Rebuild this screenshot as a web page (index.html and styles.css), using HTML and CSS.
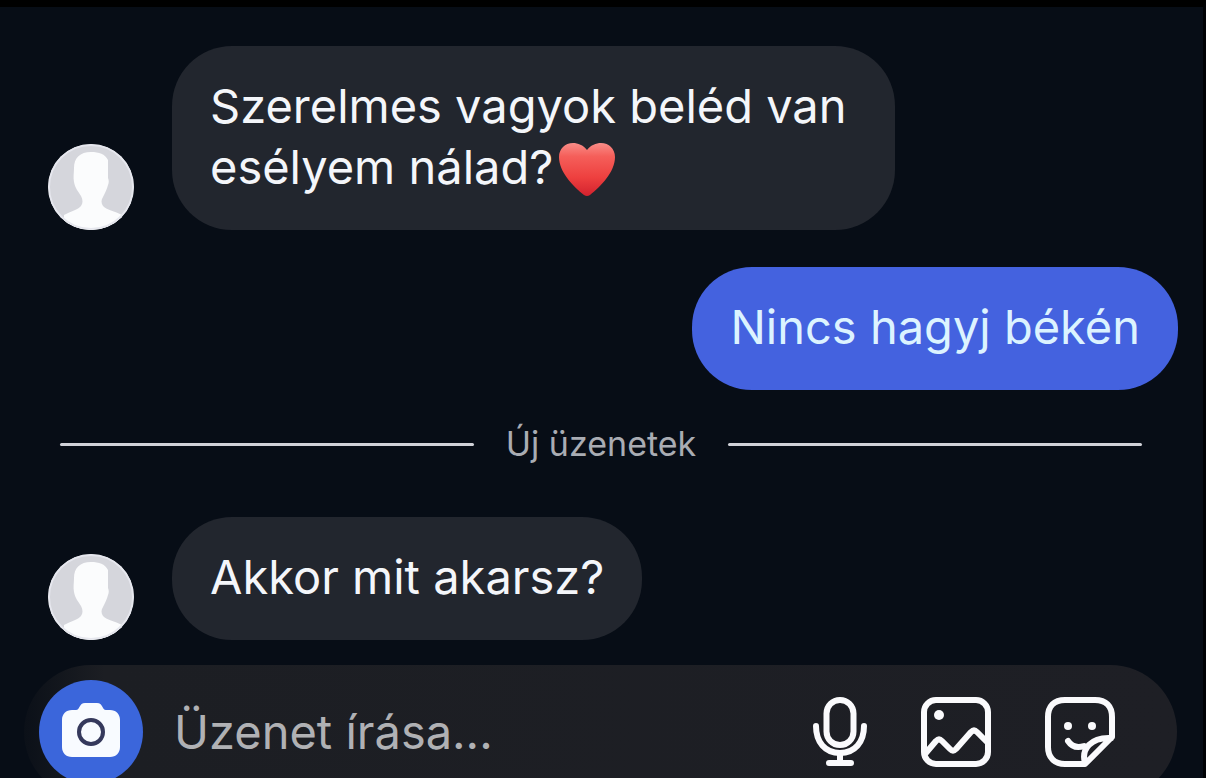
FILE: index.html
```html
<!DOCTYPE html>
<html lang="hu">
<head>
<meta charset="utf-8">
<meta name="viewport" content="width=device-width, initial-scale=1">
<title>Üzenetek</title>
<link rel="stylesheet" href="styles.css">
</head>
<body>
<svg class="defs" aria-hidden="true">
  <defs>
    <linearGradient id="heart-fill" x1="0" y1="0" x2="0" y2="1">
      <stop offset="0" stop-color="#f98d88"/>
      <stop offset=".25" stop-color="#f55f5a"/>
      <stop offset=".65" stop-color="#ee403f"/>
      <stop offset="1" stop-color="#d3222e"/>
    </linearGradient>
    <clipPath id="avatar-clip"><circle cx="43" cy="43" r="43"/></clipPath>
    <symbol id="person" viewBox="0 0 86 86">
      <g clip-path="url(#avatar-clip)">
        <rect width="86" height="86" fill="#d5d6dc"/>
        <path fill="#fbfcfd" d="M43 8c-11 0-17 6-17 16 0 5-1 9 0 14 1 6 4 9 7 14 2 4 2 7 0 10-3 4-10 5-17 9v15h58V71c-7-4-16-5-19-9-2-3-2-6 0-9 2-4 4-8 5-12 1-2 1-5 0-7V16c-3-6-9-8-17-8z"/>
        <circle cx="43" cy="43" r="42" fill="none" stroke="#e6e7ee" stroke-width="2"/>
      </g>
    </symbol>
  </defs>
</svg>
<main class="chat">
  <section class="thread" aria-label="Beszélgetés">
    <div class="message">
      <svg class="avatar" aria-hidden="true"><use href="#person"/></svg>
      <p class="bubble">Szerelmes vagyok beléd van esélyem nálad?<svg class="heart" viewBox="0 0 56 56" role="img" aria-label="❤️"><path fill="url(#heart-fill)" d="M28 8C24 3 19 1 14 1 6 1 0 7 0 15c0 15 14 29 25 38q3 2 6 0C42 44 56 30 56 15 56 7 50 1 42 1c-5 0-10 2-14 7z"/></svg></p>
    </div>
    <div class="message message-own">
      <p class="bubble bubble-own">Nincs hagyj békén</p>
    </div>
    <div class="divider"><span>Új üzenetek</span></div>
    <div class="message">
      <svg class="avatar" aria-hidden="true"><use href="#person"/></svg>
      <p class="bubble">Akkor mit akarsz?</p>
    </div>
  </section>
  <form class="composer">
    <button class="camera" type="button" aria-label="Kamera">
      <svg viewBox="0 0 58 56" width="58" height="56"><path fill="#f8fbff" d="M10 8h4c4 0 3-7 9-7h12c6 0 5 7 9 7h4c6 0 10 4 10 10v27c0 6-4 10-10 10H10C4 55 0 51 0 45V18C0 12 4 8 10 8z"/><circle cx="29" cy="30" r="12" fill="none" stroke="#35395c" stroke-width="4"/></svg>
    </button>
    <input class="field" type="text" placeholder="Üzenet írása..." aria-label="Üzenet írása">
    <div class="tools">
      <button class="tool" type="button" aria-label="Hangüzenet">
        <svg viewBox="0 0 54 70" width="54" height="70" class="line"><rect x="13.500" y="3" width="27" height="45" rx="13.500"/><path d="M3 29c0 16 9 27 24 27s24-11 24-27M27 56v9M16 66h22"/></svg>
      </button>
      <button class="tool" type="button" aria-label="Kép">
        <svg viewBox="0 0 70 70" width="70" height="70" class="line"><rect x="3" y="3" width="64" height="64" rx="12"/><path d="M4 57l11-13q3-3 6 0l8 8q3 3 6 0l15-17q3-3 6 0l11 11"/><circle class="dot" cx="18" cy="18" r="5"/></svg>
      </button>
      <button class="tool" type="button" aria-label="Matrica">
        <svg viewBox="0 0 70 70" width="70" height="70" class="line"><path d="M40 67H20C9 67 3 60 3 50V20C3 9 9 3 20 3h30c11 0 17 6 17 17v20L40 67zM40 66c-4-14 6-26 26-25M23 44c4 6 10 7 16 5"/><circle class="dot" cx="23" cy="29" r="4"/><circle class="dot" cx="47" cy="29" r="4"/></svg>
      </button>
    </div>
  </form>
</main>
</body>
</html>
```
FILE: styles.css
```css
* { box-sizing: border-box; }

body {
  margin: 0;
  background: #070d16;
  color: #f4f6fa;
  font-family: Inter, "Liberation Sans", sans-serif;
  font-size: 47px;
  line-height: 61px;
}

.defs { position: absolute; width: 0; height: 0; }

.chat {
  height: 100vh;
  overflow: hidden;
  border-top: 7px solid #000;
  border-right: 3px solid #010205;
}

.thread {
  display: flex;
  flex-direction: column;
  padding: 39px 25px 0 48px;
}

.message {
  display: flex;
  align-items: flex-end;
  gap: 38px;
}

.message-own { justify-content: flex-end; margin-top: 37px; }

.avatar { width: 86px; height: 86px; flex: none; }

.bubble {
  margin: 0;
  max-width: 64%;
  padding: 29px 38px 33px;
  border-radius: 60px;
  background: #22262e;
}

.bubble-own { background: #4462df; color: #dcf3ff; }

.heart {
  width: 56px;
  height: 56px;
  margin: -8px 0 -8px 6px;
  vertical-align: -6px;
}

.divider {
  display: flex;
  align-items: center;
  gap: 32px;
  margin: 31px 36px 50px 12px;
  color: #a9acb3;
  font-size: 34px;
  line-height: 46px;
}

.divider::before,
.divider::after {
  content: "";
  flex: 1;
  height: 3px;
  border-radius: 2px;
  background: #d0d2d8;
}

.composer {
  display: flex;
  align-items: center;
  gap: 31px;
  margin: 25px 26px 0 24px;
  padding: 15px 62px 15px 15px;
  border-radius: 67px;
  background: linear-gradient(90deg, #0b1018, #1c1e23 80px, #1e1f25);
}

.camera,
.tool {
  display: grid;
  place-items: center;
  flex: none;
  padding: 0;
  border: 0;
  background: none;
}

.camera {
  width: 104px;
  height: 104px;
  padding-bottom: 4px;
  border-radius: 50%;
  background: #3b66db;
}

.field {
  flex: 1;
  min-width: 0;
  padding: 0 0 2px;
  border: 0;
  outline: 0;
  background: none;
  color: #f4f6fa;
  font: inherit;
}

.field::placeholder { color: #b0b1b4; opacity: 1; }

.tools { display: flex; align-items: center; gap: 54px; }

.line {
  fill: none;
  stroke: #fafafc;
  stroke-width: 6;
  stroke-linecap: round;
  stroke-linejoin: round;
}

.line .dot { fill: #fafafc; stroke: none; }
```
